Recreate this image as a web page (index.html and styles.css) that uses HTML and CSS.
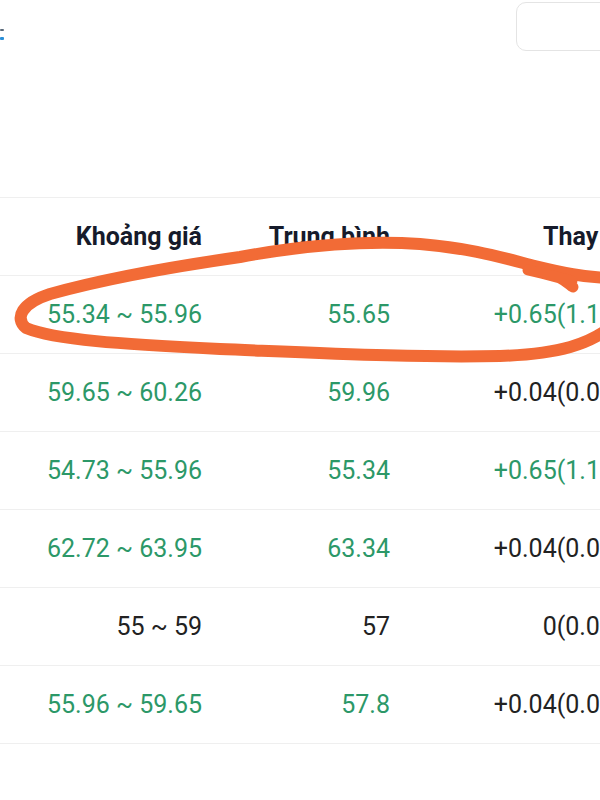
FILE: index.html
```html
<!DOCTYPE html>
<html lang="vi">
<head>
<meta charset="utf-8">
<title>Khoảng giá</title>
<link rel="stylesheet" href="styles.css">
</head>
<body>
<div class="page">
  <div class="topbar">
    <div class="edge-icon"><span class="bar bar-dark"></span><span class="bar bar-blue"></span></div>
    <div class="search-box"></div>
  </div>
  <div class="table">
    <div class="row head">
      <div class="cell">Khoảng giá</div>
      <div class="cell">Trung bình</div>
      <div class="cell">Thay đổi</div>
    </div>
    <div class="row">
      <div class="cell up">55.34 ~ 55.96</div>
      <div class="cell up">55.65</div>
      <div class="cell up">+0.65(1.18%)</div>
    </div>
    <div class="row">
      <div class="cell up">59.65 ~ 60.26</div>
      <div class="cell up">59.96</div>
      <div class="cell">+0.04(0.07%)</div>
    </div>
    <div class="row">
      <div class="cell up">54.73 ~ 55.96</div>
      <div class="cell up">55.34</div>
      <div class="cell up">+0.65(1.18%)</div>
    </div>
    <div class="row">
      <div class="cell up">62.72 ~ 63.95</div>
      <div class="cell up">63.34</div>
      <div class="cell">+0.04(0.06%)</div>
    </div>
    <div class="row">
      <div class="cell">55 ~ 59</div>
      <div class="cell">57</div>
      <div class="cell">0(0.00%)</div>
    </div>
    <div class="row">
      <div class="cell up">55.96 ~ 59.65</div>
      <div class="cell up">57.8</div>
      <div class="cell">+0.04(0.07%)</div>
    </div>
  </div>
  <svg class="annotation" width="600" height="800" viewBox="0 0 600 800">
    <path d="M612 278 C585 278 560 272 535 266 C500 257 470 248 420 244 C360 240 300 246 240 257 C170 267 100 280 50 294 C22 303 14 318 26 328 C55 340 120 344 220 349 C320 353 420 358 500 356 C560 354 590 344 612 326" fill="none" stroke="#f26b36" stroke-width="12" stroke-linecap="round" stroke-linejoin="round"/>
    <path d="M528 270 C545 274 560 278 572 281 M560 278 C566 281 570 285 573 287" fill="none" stroke="#f26b36" stroke-width="11" stroke-linecap="round"/>
  </svg>
</div>
</body>
</html>
```
FILE: styles.css
```css
* { box-sizing: border-box; }
html, body {
  margin: 0;
  padding: 0;
  background: #ffffff;
}
body {
  font-family: Roboto, "Noto Sans", "Liberation Sans", sans-serif;
  color: #222222;
}
.page {
  position: relative;
  width: 600px;
  height: 800px;
  overflow: hidden;
}
.topbar {
  height: 197px;
  display: flex;
  justify-content: space-between;
  align-items: flex-start;
}
.edge-icon {
  display: flex;
  flex-direction: column;
  gap: 6px;
  margin-top: 29px;
}
.bar {
  display: block;
  width: 4px;
  height: 2px;
  border-radius: 1px;
}
.bar-dark { background: #5a6a7a; }
.bar-blue { background: #2a8fd8; height: 3px; }
.search-box {
  width: 110px;
  height: 49px;
  margin-top: 2px;
  margin-right: -26px;
  border: 1.5px solid #e4e4e4;
  border-radius: 10px;
}
.table {
  width: 660px;
  border-top: 1px solid #efefef;
}
.row {
  display: grid;
  grid-template-columns: 202px 188px 251px;
  height: 78px;
  align-items: center;
  border-bottom: 1px solid #efefef;
  font-size: 25px;
}
.cell {
  text-align: right;
  white-space: nowrap;
}
.head .cell {
  font-weight: 700;
  color: #161b2b;
  font-size: 25px;
}
.up { color: #2c9868; }
.annotation {
  position: absolute;
  left: 0;
  top: 0;
  pointer-events: none;
}
```
